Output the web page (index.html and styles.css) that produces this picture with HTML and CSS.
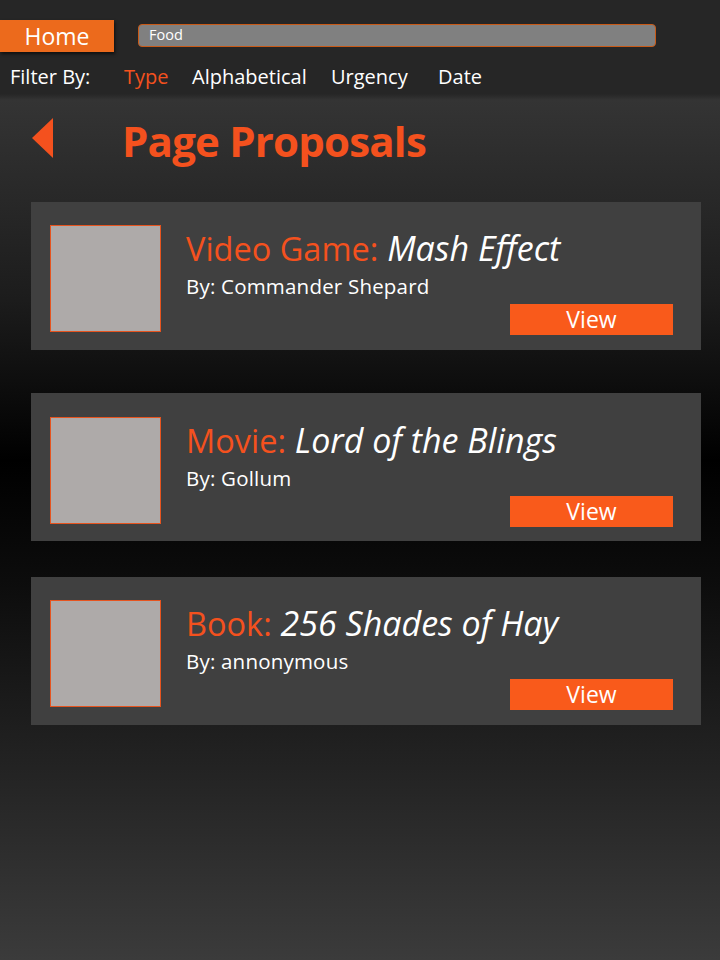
FILE: index.html
```html
<!DOCTYPE html>
<html lang="en">
<head>
<meta charset="utf-8">
<title>Page Proposals</title>
<link rel="stylesheet" href="styles.css">
</head>
<body>
<header class="topbar">
  <div class="toprow">
    <div class="home">Home</div>
    <div class="search">Food</div>
  </div>
  <nav class="filters">
    <span class="f-label">Filter By:</span>
    <span class="f-item f-type active">Type</span>
    <span class="f-item f-alpha">Alphabetical</span>
    <span class="f-item f-urg">Urgency</span>
    <span class="f-item f-date">Date</span>
  </nav>
</header>
<main class="main">
  <div class="titlerow">
    <svg class="back" width="21" height="40" viewBox="0 0 21 40"><polygon points="21,0 0,20 21,40" fill="#f4511e"/></svg>
    <h1 class="title">Page Proposals</h1>
  </div>
  <section class="card card1">
    <div class="thumb"></div>
    <div class="info">
      <div class="ctitle"><span class="kind">Video Game:</span> <em>Mash Effect</em></div>
      <div class="by">By: Commander Shepard</div>
      <div class="actions"><button class="view">View</button></div>
    </div>
  </section>
  <section class="card card2">
    <div class="thumb"></div>
    <div class="info">
      <div class="ctitle"><span class="kind">Movie:</span> <em>Lord of the Blings</em></div>
      <div class="by">By: Gollum</div>
      <div class="actions"><button class="view">View</button></div>
    </div>
  </section>
  <section class="card card3">
    <div class="thumb"></div>
    <div class="info">
      <div class="ctitle"><span class="kind">Book:</span> <em>256 Shades of Hay</em></div>
      <div class="by">By: annonymous</div>
      <div class="actions"><button class="view">View</button></div>
    </div>
  </section>
</main>
</body>
</html>
```
FILE: styles.css
```css
* { box-sizing: border-box; }
html, body { margin: 0; padding: 0; }
body {
  width: 720px;
  min-height: 960px;
  font-family: "Open Sans", "Noto Sans", sans-serif;
  color: #fff;
  background: linear-gradient(to bottom, #262626 0, #262626 94px, #343434 100px, #1c1c1c 300px, #000 460px, #0c0c0c 580px, #222 760px, #3b3b3b 960px);
}
.topbar {
  height: 94px;
  background: #262626;
  padding-top: 20px;
}
.toprow {
  display: flex;
  align-items: flex-start;
}
.home {
  width: 114px;
  height: 32px;
  background: #ec6a1c;
  color: #fff;
  font-size: 23px;
  line-height: 32px;
  text-align: center;
  box-shadow: 1px 2px 3px rgba(0,0,0,0.6);
}
.search {
  margin-left: 24px;
  margin-top: 4px;
  width: 518px;
  height: 23px;
  background: #808080;
  border: 1px solid #c95a17;
  border-radius: 4px;
  font-size: 14.5px;
  line-height: 20px;
  padding-left: 10px;
  color: #fff;
}
.filters {
  display: flex;
  align-items: baseline;
  margin-top: 12px;
  padding-left: 10px;
  font-size: 20px;
  line-height: 26px;
  color: #fff;
}
.f-label { width: 114px; }
.f-type { width: 68px; }
.f-alpha { width: 139px; }
.f-urg { width: 107px; }
.active { color: #f4511e; }

.main { padding-top: 24px; }
.titlerow {
  display: flex;
  align-items: flex-start;
  height: 40px;
  padding-left: 32px;
}
.back { display: block; flex: none; }
.title {
  margin: 3px 0 0 69px;
  font-size: 42px;
  font-weight: 700;
  color: #f4511e;
  line-height: 40px;
  letter-spacing: -0.8px;
}
.card {
  display: flex;
  width: 670px;
  height: 148px;
  margin-left: 31px;
  background: #404040;
  padding: 23px 28px 0 19px;
}
.card1 { margin-top: 44px; }
.card2 { margin-top: 43px; padding-top: 24px; }
.card3 { margin-top: 36px; }
.thumb {
  flex: none;
  width: 111px;
  height: 107px;
  background: #aeaaa9;
  border: 1px solid #e6541f;
}
.info {
  flex: 1;
  margin-left: 25px;
  display: flex;
  flex-direction: column;
}
.ctitle {
  font-size: 34px;
  line-height: 36px;
  margin-top: 5px;
  white-space: nowrap;
}
.kind { color: #f4511e; font-size: 32.5px; font-weight: 400; }
.ctitle em { font-style: italic; color: #fff; font-weight: 400; }
.by {
  font-size: 20.5px;
  line-height: 24px;
  margin-top: 7px;
  letter-spacing: 0.2px;
}
.actions {
  display: flex;
  justify-content: flex-end;
  margin-top: 6px;
}
.view {
  width: 163px;
  height: 31px;
  border: 0;
  background: #f95a1b;
  color: #fff;
  font-family: inherit;
  font-size: 23px;
  line-height: 31px;
  padding: 0;
}
```
